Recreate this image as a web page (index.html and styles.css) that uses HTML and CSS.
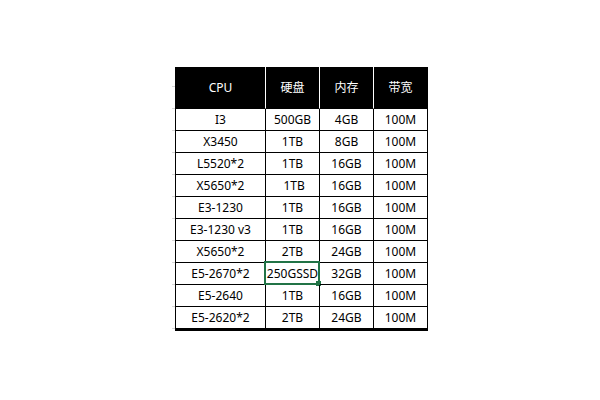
FILE: index.html
```html
<!DOCTYPE html>
<html lang="zh-CN">
<head>
<meta charset="utf-8">
<title>服务器配置</title>
<link rel="stylesheet" href="styles.css">
</head>
<body>
<div class="sheet">
  <div class="gutter"></div>
  <div class="grid">
    <div class="cell head">CPU</div>
    <div class="cell head">硬盘</div>
    <div class="cell head">内存</div>
    <div class="cell head last">带宽</div>

    <div class="cell">I3</div><div class="cell">500GB</div><div class="cell">4GB</div><div class="cell">100M</div>
    <div class="cell">X3450</div><div class="cell">1TB</div><div class="cell">8GB</div><div class="cell">100M</div>
    <div class="cell">L5520*2</div><div class="cell">1TB</div><div class="cell">16GB</div><div class="cell">100M</div>
    <div class="cell">X5650*2</div><div class="cell">&nbsp;1TB</div><div class="cell">16GB</div><div class="cell">100M</div>
    <div class="cell">E3-1230</div><div class="cell">1TB</div><div class="cell">16GB</div><div class="cell">100M</div>
    <div class="cell">E3-1230 v3</div><div class="cell">1TB</div><div class="cell">16GB</div><div class="cell">100M</div>
    <div class="cell">X5650*2</div><div class="cell">2TB</div><div class="cell">24GB</div><div class="cell">100M</div>
    <div class="cell">E5-2670*2</div><div class="cell selected">250GSSD<span class="sel-box"></span><span class="sel-handle"></span></div><div class="cell">32GB</div><div class="cell">100M</div>
    <div class="cell">E5-2640</div><div class="cell">1TB</div><div class="cell">16GB</div><div class="cell">100M</div>
    <div class="cell end">E5-2620*2</div><div class="cell end">2TB</div><div class="cell end">24GB</div><div class="cell end">100M</div>
  </div>
</div>
</body>
</html>
```
FILE: styles.css
```css
html, body {
  margin: 0;
  padding: 0;
  background: #ffffff;
}

body {
  font-family: "Noto Sans", "Noto Sans CJK SC", sans-serif;
  font-size: 12px;
  color: #000000;
}

.sheet {
  display: flex;
  padding: 67px 0 0 172px;
}

.gutter {
  width: 3px;
  height: 264px;
  background-image: repeating-linear-gradient(to bottom, transparent 0, transparent 21px, #d6d6d6 21px, #d6d6d6 22px);
  background-position: 0 -2px;
}

.grid {
  display: grid;
  grid-template-columns: 90px 54px 54px 54px;
  grid-auto-rows: 22px;
  grid-template-rows: 42px;
  border-left: 1px solid #000000;
}

.cell {
  box-sizing: border-box;
  border-right: 1px solid #000000;
  border-bottom: 1px solid #000000;
  display: flex;
  align-items: center;
  justify-content: center;
  white-space: pre;
  line-height: 1;
  position: relative;
}

.head {
  background: #000000;
  color: #ffffff;
  border-right-color: #ffffff;
  font-family: "Noto Sans", "Noto Sans CJK SC", sans-serif;
}

.head.last {
  border-right-color: #000000;
}

.end {
  border-bottom-width: 3px;
  height: 24px;
}

.grid > .end {
  margin-bottom: -2px;
}

.sel-box {
  position: absolute;
  left: -2px;
  top: -2px;
  right: -1px;
  bottom: -1px;
  border: 2px solid #217346;
}

.sel-handle {
  position: absolute;
  right: -2px;
  bottom: -2px;
  width: 5px;
  height: 5px;
  background: #217346;
}
```
